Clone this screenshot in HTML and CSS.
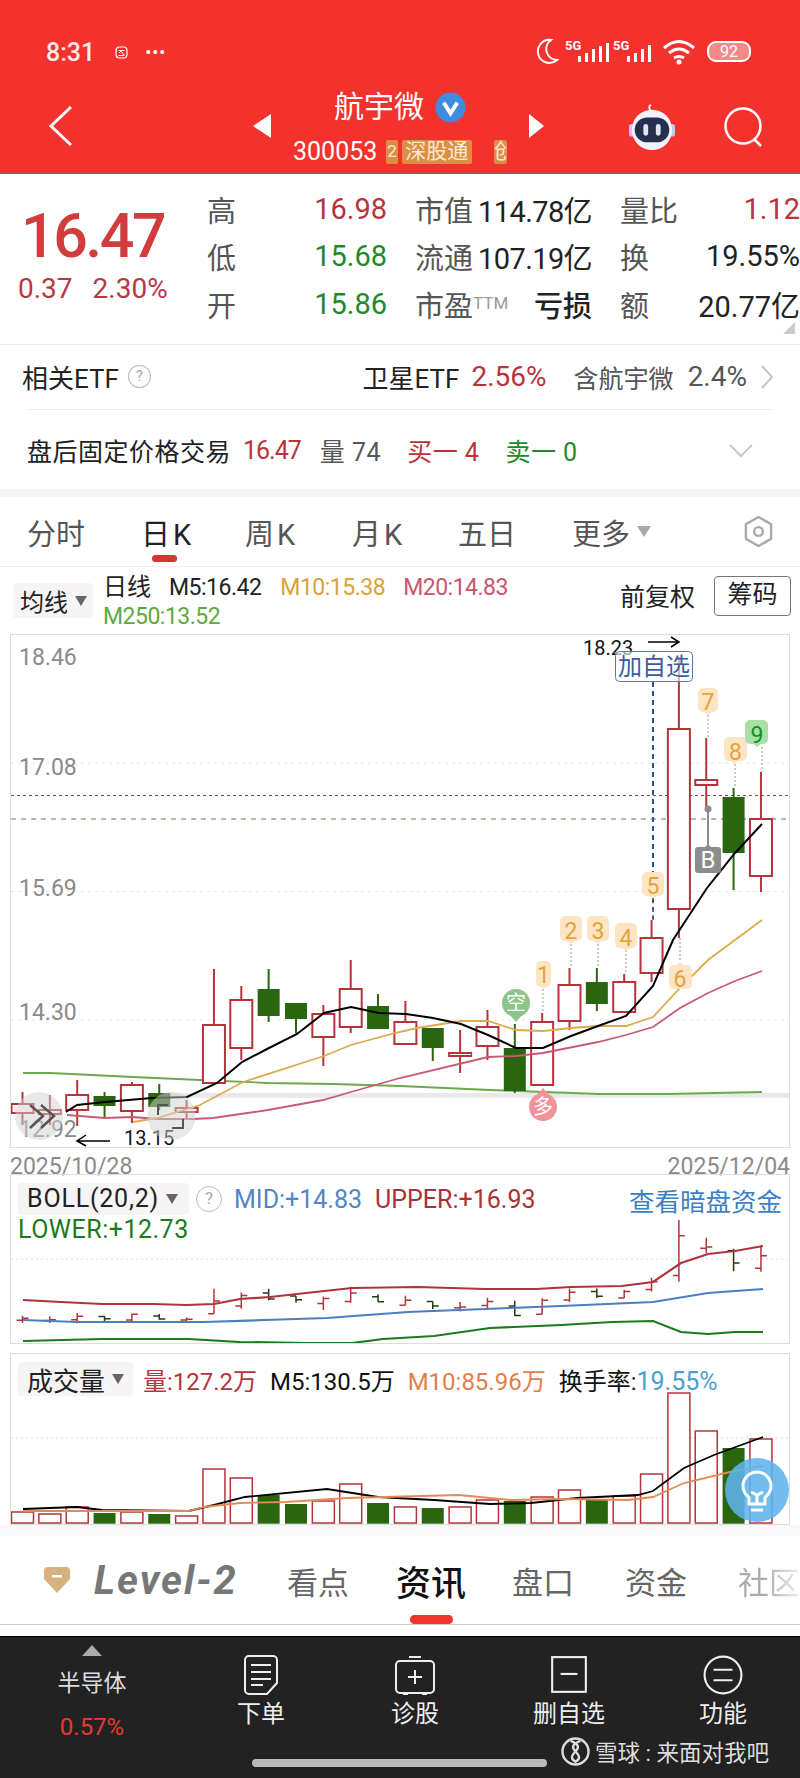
FILE: index.html
```html
<!DOCTYPE html>
<html lang="zh-CN">
<head>
    <meta charset="UTF-8">
    <meta name="viewport" content="width=device-width, initial-scale=1.0">
    <title>航宇微 300053</title>
    <link rel="stylesheet" href="styles.css">
</head>
<body>
<div class="phone">

    <header class="topbar">
        <div class="status">
            <div class="status-left">
                <span class="clock">8:31</span>
                <svg class="status-app" viewBox="0 0 13 13"><rect x="1" y="1" width="11" height="11" rx="3.5" fill="none" stroke="#fff" stroke-width="1.2"/><path d="M3.5 4.5h6M4 7l2-2 3 4M3.5 9.5h6" fill="none" stroke="#fff"/></svg>
                <span class="status-dots">•••</span>
            </div>
            <svg class="status-right" viewBox="537 37 216 30">
                <path d="M552 40a11.500 11.500 0 1 0 6 20a11 11 0 0 1-6-20z" fill="none" stroke="#fff" stroke-width="2"/>
                <text class="net" x="566" y="50">5G</text>
                <g fill="#fff"><rect x="579" y="56" width="3" height="6"/><rect x="586" y="53" width="3" height="9"/><rect x="593" y="49" width="3" height="13"/><rect x="600" y="46" width="3" height="16"/><rect x="607" y="43" width="3" height="19"/></g>
                <text class="net" x="614" y="50">5G</text>
                <g fill="#fff"><rect x="628" y="56" width="3" height="6"/><rect x="635" y="53" width="3" height="9"/><rect x="642" y="49" width="3" height="13"/><rect x="649" y="45" width="3" height="17"/></g>
                <g fill="none" stroke="#fff" stroke-width="3"><path d="M665 48q15-13 30 0"/><path d="M670 53q10-8 20 0"/><path d="M675 58q5-3 10 0"/></g>
                <circle cx="680" cy="62" r="2.500" fill="#fff"/>
                <rect x="709" y="42" width="42" height="19" rx="8" fill="#f58b88" stroke="#fff" stroke-width="2"/>
                <text class="batt" x="730" y="57">92</text>
            </svg>
        </div>
        <nav class="stock-nav">
            <svg class="nav-back" viewBox="0 0 26 42"><path d="M23 2L3 21l20 19" fill="none" stroke="#fff" stroke-width="3"/></svg>
            <span class="arrow-left"></span>
            <div class="stock-title">
                <div class="stock-name">航宇微 <svg class="v-badge" viewBox="0 0 32 32"><circle cx="16" cy="16" r="15.500" fill="#3f8be0"/><path d="M9 11l7 11 7-11" fill="none" stroke="#fff" stroke-width="4"/></svg></div>
                <div class="stock-code">300053
                    <span class="tag tag-left"><span>2</span></span>
                    <span class="tag">深股通</span>
                    <span class="tag tag-cut">创业板</span>
                </div>
            </div>
            <span class="arrow-right"></span>
            <div class="nav-actions">
                <svg class="robot" viewBox="0 0 50 50">
                    <path d="M25 9c-3-1-4-6-1-7" fill="none" stroke="#eee" stroke-width="2"/>
                    <rect x="1" y="22" width="6" height="13" rx="3" fill="#c9c6f2"/><rect x="43" y="22" width="6" height="13" rx="3" fill="#c9c6f2"/>
                    <circle cx="25" cy="28" r="21" fill="#f3f1fb"/>
                    <rect x="7" y="15" width="36" height="26" rx="13" fill="#25304f"/>
                    <rect x="16" y="22" width="5" height="12" rx="2.500" fill="#dfe6f5"/><rect x="29" y="22" width="5" height="12" rx="2.500" fill="#dfe6f5"/>
                </svg>
                <svg class="search" viewBox="0 0 40 40"><circle cx="19" cy="19" r="17.500" fill="none" stroke="#fff" stroke-width="2.500"/><path d="M30 32l7 7" stroke="#fff" stroke-width="2.500"/></svg>
            </div>
        </nav>
    </header>

    <section class="quote">
        <div class="price-box">
            <div class="price">16.47</div>
            <div class="price-change"><span>0.37</span><span>2.30%</span></div>
        </div>
        <div class="stats">
            <div class="stat"><span class="label">高</span><span class="red">16.98</span></div>
            <div class="stat"><span class="label">市值</span><span class="tight">114.78亿</span></div>
            <div class="stat"><span class="label">量比</span><span class="red">1.12</span></div>
            <div class="stat"><span class="label">低</span><span class="green">15.68</span></div>
            <div class="stat"><span class="label">流通</span><span class="tight">107.19亿</span></div>
            <div class="stat"><span class="label">换</span><span>19.55%</span></div>
            <div class="stat"><span class="label">开</span><span class="green">15.86</span></div>
            <div class="stat"><span class="label">市盈<small>TTM</small></span><strong>亏损</strong></div>
            <div class="stat"><span class="label">额</span><span>20.77亿</span></div>
        </div>
        <span class="corner"></span>
    </section>

    <section class="etf-row">
        <span>相关ETF</span>
        <span class="help">?</span>
        <span class="etf-name">卫星ETF</span>
        <span class="red etf-pct">2.56%</span>
        <span class="gray etf-hold">含航宇微</span>
        <span class="gray etf-hold-pct">2.4%</span>
        <svg class="chev" viewBox="0 0 14 26"><path d="M2 2l10 11L2 24" fill="none" stroke="#c4c4c4" stroke-width="2"/></svg>
    </section>

    <section class="after-row">
        <span>盘后固定价格交易</span>
        <span class="red after-price">16.47</span>
        <span class="gray after-vol">量 74</span>
        <span class="red after-buy">买一 4</span>
        <span class="green after-sell">卖一 0</span>
        <svg class="chev-down" viewBox="0 0 26 16"><path d="M2 2l11 11L24 2" fill="none" stroke="#c9c9c9" stroke-width="2"/></svg>
    </section>

    <div class="band"></div>

    <section class="period-tabs">
        <span class="period">分时</span>
        <span class="period active k-tab">日K</span>
        <span class="period k-tab">周K</span>
        <span class="period k-tab">月K</span>
        <span class="period">五日</span>
        <span class="period period-more">更多<i class="caret caret-light"></i></span>
        <svg class="hex" viewBox="0 0 32 32"><path d="M16 1l13 7.500v15L16 31 3 23.500v-15z" fill="none" stroke="#aaa" stroke-width="2.500"/><circle cx="16" cy="16" r="4.500" fill="none" stroke="#aaa" stroke-width="2.500"/></svg>
    </section>

    <section class="ma-row">
        <div class="chip chip-ma">均线<i class="caret"></i></div>
        <div class="ma-values">
            <div><span class="ma-day">日线</span><span class="ma-5">M5:16.42</span><span class="ma-10">M10:15.38</span><span class="ma-20">M20:14.83</span></div>
            <div class="ma-250">M250:13.52</div>
        </div>
        <span class="adjust">前复权</span>
        <span class="chip-box">筹码</span>
    </section>

    <section class="frame chart-main">
        <svg viewBox="11 635 778 512" width="778" height="512">
            <g stroke="#e6e6e6" stroke-dasharray="3 4">
                <line x1="11" x2="789" y1="763" y2="763"/><line x1="11" x2="789" y1="891.500" y2="891.500"/><line x1="11" x2="789" y1="1020" y2="1020"/>
            </g>
            <line x1="11" x2="789" y1="795.500" y2="795.500" stroke="#75573a" stroke-dasharray="3 3"/>
            <line x1="11" x2="789" y1="819" y2="819" stroke="#7d6a55" stroke-dasharray="5 5"/>
            <rect x="160" y="1093" width="629" height="5" fill="#e9e9e9"/>
            <polyline class="line" stroke="#6ca84e" points="23,1073 50,1073 133,1077 200,1080 268,1083 333,1084 400,1086 490,1090 516,1091 600,1094 667,1094 762,1092"/>
            <line x1="653" x2="653" y1="682" y2="920" stroke="#2f4d8f" stroke-width="2" stroke-dasharray="5 4"/>
            <g id="main-candles"></g>
            <polyline class="line" stroke="#c95a74" points="67,1115 105,1118 132,1117 157,1119 193,1119 213,1118 268,1110 323,1100 351,1092 400,1078 488,1057 516,1056 543,1053 598,1042 626,1035 653,1027 680,1008 708,993 735,981 762,971"/>
            <polyline class="line" stroke="#dcab4c" points="133,1122 157,1118 200,1105 243,1082 324,1056 351,1045 395,1033 417,1028 461,1021 488,1021 516,1030 543,1031 571,1028 598,1026 626,1026 653,1017 680,988 708,960 735,940 762,920"/>
            <polyline class="line line-ma5" points="66,1112 77,1105 105,1102 152,1098 187,1097 217,1083 242,1062 269,1048 297,1034 324,1013 351,1007 379,1013 406,1014 433,1018 461,1024 488,1035 516,1048 543,1048 571,1036 598,1026 626,1016 653,986 673,940 707,888 735,853 762,824"/>

            <text class="axis" x="19" y="665">18.46</text>
            <text class="axis" x="19" y="775">17.08</text>
            <text class="axis" x="19" y="896">15.69</text>
            <text class="axis" x="19" y="1020">14.30</text>
            <text class="extreme" x="583" y="655">18.23</text>
            <path d="M648 642h31m-8-5l8 5-8 5" fill="none" stroke="#000" stroke-width="1.500"/>
            <rect class="add-box" x="615.500" y="651.500" width="77" height="30" rx="4"/>
            <text class="add-text" x="654" y="675">加自选</text>

            <g stroke="#999" stroke-dasharray="2 2">
                <line x1="571" x2="571" y1="944" y2="968"/><line x1="598" x2="598" y1="944" y2="968"/><line x1="626" x2="626" y1="950" y2="974"/>
                <line x1="543" x2="543" y1="989" y2="1013"/><line x1="653" x2="653" y1="898" y2="920"/><line x1="680" x2="680" y1="938" y2="962"/>
                <line x1="708" x2="708" y1="715" y2="738"/><line x1="735" x2="735" y1="764" y2="788"/><line x1="762" x2="762" y1="747" y2="772"/>
            </g>
            <g class="mark">
                <rect x="536" y="961" width="15" height="26" rx="5"/><path d="M540 986h7l-3.500 3z"/><text x="543.500" y="983">1</text>
                <rect x="560" y="916" width="22" height="25" rx="5"/><path d="M566 940h10l-5 4z"/><text x="571" y="939">2</text>
                <rect x="587" y="916" width="22" height="25" rx="5"/><path d="M593 940h10l-5 4z"/><text x="598" y="939">3</text>
                <rect x="615" y="923" width="22" height="25" rx="5"/><path d="M621 947h10l-5 4z"/><text x="626" y="946">4</text>
                <rect x="642" y="872" width="22" height="24" rx="5"/><path d="M648 895h10l-5 3z"/><text x="653" y="894">5</text>
                <rect x="669" y="965" width="23" height="24" rx="5"/><path d="M675 966h10l-5-4z"/><text x="680" y="987">6</text>
                <rect x="698" y="688" width="20" height="24" rx="5"/><path d="M703 711h10l-5 4z"/><text x="708" y="710">7</text>
                <rect x="724" y="737" width="23" height="24" rx="5"/><path d="M730 760h10l-5 4z"/><text x="735.500" y="760">8</text>
            </g>
            <g class="mark mark-green">
                <rect x="745" y="720" width="23" height="24" rx="5"/><path d="M752 743h10l-5 4z"/><text x="757" y="743">9</text>
            </g>
            <circle cx="516" cy="1003" r="14" fill="#8cc58a"/><path d="M510 1015h12l-6 7z" fill="#8cc58a"/>
            <text class="sign" x="516" y="1010">空</text>
            <circle cx="543" cy="1107" r="14" fill="#f2939a"/><path d="M537 1095h12l-6-7z" fill="#f2939a"/>
            <text class="sign" x="543" y="1114">多</text>
            <line x1="708" x2="708" y1="809" y2="846" stroke="#8c8c8c" stroke-width="2"/>
            <circle cx="708" cy="809" r="3.500" fill="#8c8c8c"/>
            <path d="M698 847h7l3-3 3 3h7a3 3 0 0 1 3 3v20a3 3 0 0 1-3 3h-20a3 3 0 0 1-3-3v-20a3 3 0 0 1 3-3z" fill="#8c8c8c"/>
            <text class="sign sign-b" x="708" y="868">B</text>

            <text class="axis" x="19" y="1137">12.92</text>
            <path d="M110 1141H78m8-6l-9 6 9 5" fill="none" stroke="#000" stroke-width="1.500"/>
            <text class="extreme" x="124" y="1145">13.15</text>
            <circle cx="39" cy="1116" r="24" fill="#d2d2d2" fill-opacity=".5"/>
            <path d="M30 1105l13 11-13 12M41 1105l13 11-13 12" fill="none" stroke="#555" stroke-width="2.500"/>
            <circle cx="171.500" cy="1116" r="24" fill="#d2d2d2" fill-opacity=".5"/>
            <path d="M158 1115v-10h10M183 1119v9h-11" fill="none" stroke="#555" stroke-width="2"/>
        </svg>
    </section>

    <div class="dates"><span>2025/10/28</span><span>2025/12/04</span></div>

    <section class="frame panel panel-boll">
        <svg viewBox="11 1175 778 168" width="778" height="168">
            <line x1="11" x2="789" y1="1259" y2="1259" stroke="#ddd" stroke-dasharray="2 3"/>
            <g id="boll-bars"></g>
            <polyline class="line line-thick" stroke="#4a7fbf" points="23,1320 77,1322 153,1322 204,1322 265,1320 327,1318 408,1312 459,1310 510,1308 561,1306 653,1302 708,1293 763,1289"/>
            <polyline class="line line-thick" stroke="#b0333a" points="23,1300 61,1302 102,1304 153,1304 186,1305 214,1304 240,1299 270,1297 306,1293 352,1288 418,1287 485,1289 536,1289 571,1287 622,1286 653,1282 681,1263 708,1254 735,1251 763,1246"/>
            <polyline class="line line-thick" stroke="#1c7a1c" points="23,1341 102,1339 189,1339 240,1342 306,1343 352,1343 383,1339 434,1336 490,1328 561,1325 612,1322 653,1321 681,1332 708,1334 735,1332 763,1332"/>
        </svg>
        <div class="panel-head">
            <div class="boll-line">
                <div class="chip chip-boll">BOLL(20,2)<i class="caret"></i></div>
                <span class="help help-boll">?</span>
                <span class="boll-mid">MID:+14.83</span>
                <span class="boll-upper">UPPER:+16.93</span>
                <span class="boll-link">查看暗盘资金</span>
            </div>
            <div class="boll-lower">LOWER:+12.73</div>
        </div>
    </section>

    <section class="frame panel panel-vol">
        <svg viewBox="11 1354 778 170" width="778" height="170">
            <line x1="11" x2="789" y1="1438" y2="1438" stroke="#ddd" stroke-dasharray="2 3"/>
            <g id="vol-bars"></g>
            <polyline class="line" stroke="#000" points="23,1509 77,1507 102,1510 189,1511 214,1505 245,1497 327,1489 378,1497 434,1500 490,1504 531,1503 577,1498 638,1495 653,1491 684,1468 714,1455 763,1437"/>
            <polyline class="line" stroke="#e58a55" points="23,1511 189,1511 204,1507 240,1503 286,1502 347,1498 459,1495 510,1500 561,1499 628,1500 653,1497 684,1483 730,1472 763,1466"/>
        </svg>
        <div class="panel-head">
            <div class="vol-line">
                <div class="chip chip-vol">成交量<i class="caret"></i></div>
                <span class="vol-now">量:127.2万</span>
                <span class="vol-m5">M5:130.5万</span>
                <span class="vol-m10">M10:85.96万</span>
                <span class="vol-turn">换手率:<em>19.55%</em></span>
            </div>
        </div>
        <div class="bulb">
            <svg viewBox="0 0 64 64" width="64" height="64"><path d="M32 14a14 14 0 0 0-8 25.500V46h16v-6.500A14 14 0 0 0 32 14zM26 34l6 3 6-3M32 37v9M26 52h12" fill="none" stroke="#fff" stroke-width="3"/></svg>
        </div>
    </section>

    <div class="band band-low"></div>

    <section class="info-tabs">
        <svg class="diamond" viewBox="0 0 30 28"><path d="M6 1h18a4 4 0 0 1 4 4v8L15 27 2 13V5a4 4 0 0 1 4-4z" fill="#d6b27e"/><rect x="10" y="9" width="10" height="2.500" fill="#fff"/></svg>
        <span class="level2">Level-2</span>
        <span>看点</span>
        <span class="info-active">资讯</span>
        <span>盘口</span>
        <span>资金</span>
        <span class="info-fade">社区</span>
    </section>

    <footer class="toolbar">
        <div class="sector">
            <span class="sector-up"></span>
            <span class="sector-name">半导体</span>
            <span class="sector-pct">0.57%</span>
        </div>
        <div class="tool">
            <svg viewBox="0 0 36 40"><path d="M6 1h24a4 4 0 0 1 4 4v23l-10 11H6a4 4 0 0 1-4-4V5a4 4 0 0 1 4-4zM8 10h20M8 17h20M8 24h20M8 30h12" fill="none" stroke="#eee" stroke-width="2"/></svg>
            <span>下单</span>
        </div>
        <div class="tool">
            <svg viewBox="0 0 44 40"><path d="M16 2h12M7 6h30a4 4 0 0 1 4 4v24a4 4 0 0 1-4 4H7a4 4 0 0 1-4-4V10a4 4 0 0 1 4-4zM22 15v14M15 22h14M10 39h5M29 39h5" fill="none" stroke="#eee" stroke-width="2"/></svg>
            <span>诊股</span>
        </div>
        <div class="tool">
            <svg viewBox="0 0 36 38"><rect x="2" y="2" width="32" height="33" fill="none" stroke="#eee" stroke-width="2"/><path d="M10 18h16" stroke="#eee" stroke-width="2"/></svg>
            <span>删自选</span>
        </div>
        <div class="tool">
            <svg viewBox="0 0 38 38"><circle cx="19" cy="19" r="17.500" fill="none" stroke="#eee" stroke-width="2"/><path d="M10 14h18M10 24h18" stroke="#eee" stroke-width="2"/></svg>
            <span>功能</span>
        </div>
        <div class="watermark">
            <svg viewBox="0 0 30 30"><circle cx="15" cy="15" r="13.500" fill="none" stroke="#ddd" stroke-width="2.500"/><path d="M10 4c7 3 10 6 5 11s-5 8 1 11M20 4c-7 3-10 6-5 11s5 8-1 11" fill="none" stroke="#ddd" stroke-width="2.500"/></svg>
            <span>雪球 : 来面对我吧</span>
        </div>
        <div class="home-bar"></div>
    </footer>
</div>
<script src="chart.js"></script>
</body>
</html>
```

FILE: styles.css
```css
* {
    box-sizing: border-box;
}

body {
    margin: 0;
    background-color: #fff;
    font-family: Roboto, "Noto Sans CJK SC", sans-serif;
    color: #222;
}

.phone {
    width: 800px;
    height: 1778px;
    overflow: hidden;
    position: relative;
}

.red { color: #b8343a; }
.green { color: #1e8a2a; }
.gray { color: #555; }

/* top bar */
.topbar {
    height: 174px;
    background-color: #f3322e;
    border-bottom: 2px solid #c9434a;
    color: #fff;
}

.status {
    height: 88px;
    padding: 16px 48px 0 46px;
    display: flex;
    justify-content: space-between;
    align-items: center;
}

.status-left {
    display: flex;
    align-items: center;
}

.clock {
    font-size: 25px;
    font-weight: 500;
    color: #fbe9e8;
}

.status-app {
    width: 13px;
    height: 13px;
    margin-left: 20px;
}

.status-dots {
    font-size: 18px;
    letter-spacing: 1px;
    margin-left: 17px;
}

.status-right {
    width: 216px;
    height: 30px;
}

.net {
    font-size: 13px;
    font-weight: 700;
    fill: #fff;
}

.batt {
    font-size: 16px;
    fill: #fff;
    text-anchor: middle;
}

.stock-nav {
    height: 84px;
    display: grid;
    grid-template-columns: 253px 18px 258px 15px 1fr;
    align-items: center;
}

.nav-back {
    width: 26px;
    height: 42px;
    margin: 0 0 8px 48px;
}

.arrow-left {
    width: 0;
    height: 0;
    border-style: solid;
    border-width: 12.5px 18px 12.5px 0;
    border-color: transparent #fff transparent transparent;
    margin-bottom: 8px;
}

.arrow-right {
    width: 0;
    height: 0;
    border-style: solid;
    border-width: 12px 0 12px 15px;
    border-color: transparent transparent transparent #fff;
    margin-bottom: 8px;
}

.stock-title {
    display: flex;
    flex-direction: column;
    align-items: center;
    height: 84px;
}

.stock-name {
    height: 38px;
    font-size: 30px;
    line-height: 38px;
    display: flex;
    align-items: center;
    gap: 1px;
}

.v-badge {
    width: 31px;
    height: 31px;
    margin-left: 10px;
}

.stock-code {
    margin-top: 13px;
    display: flex;
    align-items: center;
    font-size: 25px;
    line-height: 25px;
    gap: 9px;
    width: 214px;
}

.tag {
    height: 24px;
    padding: 0 3.5px;
    font-size: 21px;
    line-height: 23px;
    background-color: #dc8f44;
    border-radius: 2px;
    color: #fbe7d2;
    white-space: nowrap;
    margin-left: -5px;
}

.tag-left {
    width: 12px;
    padding: 0;
    text-align: center;
    margin-left: 0;
    font-size: 17px;
}

.tag-cut {
    width: 14px;
    padding: 0;
    overflow: hidden;
    margin-left: 13px;
}

.nav-actions {
    display: flex;
    align-items: center;
    margin-left: 84px;
    margin-bottom: 6px;
    gap: 48px;
}

.robot {
    width: 48px;
    height: 48px;
}

.search {
    width: 40px;
    height: 40px;
}

/* quote */
.quote {
    height: 171px;
    display: flex;
    position: relative;
    border-bottom: 1px solid #eee;
}

.price-box {
    width: 207px;
    padding-top: 32px;
}

.price {
    font-size: 61px;
    line-height: 60px;
    font-weight: 500;
    letter-spacing: -2.5px;
    padding-left: 21px;
    color: #d23c3c;
}

.price-change {
    margin-top: 6px;
    padding-left: 18px;
    display: flex;
    gap: 20px;
    font-size: 28px;
    line-height: 34px;
    color: #b8383f;
}

.stats {
    display: grid;
    grid-template-columns: 180px 177px 180px;
    grid-auto-rows: 47.5px;
    column-gap: 28px;
    padding-top: 11px;
    font-size: 29px;
}

.stat {
    display: flex;
    justify-content: space-between;
    align-items: center;
    white-space: nowrap;
}

.stat strong {
    font-weight: 500;
}

.tight {
    letter-spacing: -0.6px;
}

.label {
    color: #555;
}

.label small {
    font-size: 17px;
    color: #999;
    vertical-align: 8px;
}

.corner {
    position: absolute;
    right: 5px;
    bottom: 10px;
    width: 0;
    height: 0;
    border-style: solid;
    border-width: 0 0 12px 12px;
    border-color: transparent transparent #ccc transparent;
}

/* etf rows */
.etf-row {
    height: 65px;
    margin: 0 26px;
    padding-bottom: 1px;
    display: flex;
    align-items: center;
    font-size: 26px;
    border-bottom: 1px solid #eee;
    white-space: nowrap;
}

.etf-row > span:first-child {
    margin-left: -4px;
}

.help {
    width: 23px;
    height: 23px;
    margin-left: 9px;
    border: 1.5px solid #bbb;
    border-radius: 50%;
    color: #aaa;
    font-size: 15px;
    line-height: 20px;
    text-align: center;
}

.etf-name { margin-left: 212px; }
.etf-pct { margin-left: 12px; font-size: 28px; }
.etf-hold { margin-left: 27px; font-size: 25px; }
.etf-hold-pct { margin-left: 14px; font-size: 28px; }

.chev {
    width: 14px;
    height: 26px;
    margin-left: 13px;
    flex: none;
}

.after-row {
    height: 79px;
    padding: 1px 0 0 27px;
    display: flex;
    align-items: center;
    font-size: 25px;
    letter-spacing: 0.5px;
    white-space: nowrap;
}

.after-price { margin-left: 12px; letter-spacing: -1px; }
.after-vol { margin-left: 19px; }
.after-buy { margin-left: 26px; }
.after-sell { margin-left: 26px; }

.chev-down {
    position: absolute;
    left: 728px;
    top: 443px;
    width: 26px;
    height: 16px;
}

.band {
    height: 8px;
    background-color: #f6f6f6;
}

/* period tabs */
.period-tabs {
    height: 70px;
    padding-left: 27px;
    display: grid;
    grid-template-columns: 114px 104px 107px 106px 114px 1fr 31px 26px;
    align-items: center;
    font-size: 29px;
    color: #555;
    border-bottom: 1px solid #eee;
}

.period {
    position: relative;
}

.k-tab {
    letter-spacing: 3px;
}

.period.active {
    color: #222;
}

.period.active::after {
    content: "";
    position: absolute;
    left: 11px;
    top: 44px;
    width: 25px;
    height: 7px;
    border-radius: 4px;
    background-color: #d9342f;
}

.period-more {
    display: flex;
    align-items: center;
}

.hex {
    width: 31px;
    height: 31px;
    grid-column: 7;
}

.caret {
    display: inline-block;
    width: 0;
    height: 0;
    margin-left: 7px;
    border-style: solid;
    border-width: 10px 6px 0 6px;
    border-color: #666 transparent transparent transparent;
}

.caret-light {
    border-width: 11px 7px 0 7px;
    border-color: #aaa transparent transparent transparent;
}

/* moving averages */
.ma-row {
    height: 67px;
    padding: 0 9px 0 13px;
    display: flex;
    align-items: flex-start;
    font-size: 23px;
    white-space: nowrap;
}

.chip {
    display: flex;
    align-items: center;
    background-color: #f6f4f4;
    border-radius: 4px;
    color: #222;
}

.chip-ma {
    width: 80px;
    height: 35px;
    margin-top: 16px;
    padding-left: 7px;
    font-size: 24px;
}

.ma-values {
    margin: 6px 0 0 10px;
    line-height: 29px;
    letter-spacing: -0.5px;
}

.ma-day { font-size: 24px; letter-spacing: 0; }
.ma-5 { margin-left: 18px; }
.ma-10 { margin-left: 19px; color: #d9a23a; }
.ma-20 { margin-left: 18px; color: #c9556f; }
.ma-250 { color: #5fa83f; }

.adjust {
    margin: 16px 19px 0 auto;
    font-size: 25px;
    line-height: 30px;
}

.chip-box {
    width: 77px;
    height: 40px;
    margin-top: 9px;
    border: 1px solid #777;
    border-radius: 4px;
    font-size: 25px;
    line-height: 36px;
    text-align: center;
}

/* charts */
.frame {
    width: 780px;
    margin-left: 10px;
    border: 1px solid #ddd;
}

.frame svg {
    display: block;
}

.chart-main {
    height: 514px;
}

.line {
    fill: none;
    stroke-width: 1.800;
}

.line-ma5 {
    stroke: #000;
    stroke-width: 2;
}

.line-thick {
    stroke-width: 2.200;
}

.axis {
    font-size: 23px;
    fill: #8a8a8a;
}

.extreme {
    font-size: 20px;
    fill: #111;
}

.add-box {
    fill: #fff;
    fill-opacity: .6;
    stroke: #5b7aa5;
}

.add-text {
    font-size: 24px;
    fill: #3a5da0;
    text-anchor: middle;
}

.mark rect, .mark path {
    fill: #fde5c3;
}

.mark text {
    font-size: 23px;
    fill: #e3a33f;
    text-anchor: middle;
}

.mark-green rect, .mark-green path {
    fill: #a9dfa9;
}

.mark-green text {
    fill: #12921a;
}

.sign {
    font-size: 20px;
    fill: #fff;
    text-anchor: middle;
}

.sign-b {
    font-size: 24px;
}

.dates {
    height: 26px;
    padding: 0 10px;
    display: flex;
    justify-content: space-between;
    font-size: 23px;
    line-height: 38px;
    color: #8a8a8a;
}

.panel {
    display: grid;
    position: relative;
}

.panel > svg, .panel-head {
    grid-area: 1 / 1;
}

.panel-boll {
    height: 170px;
}

.panel-vol {
    height: 172px;
    margin-top: 9px;
}

.panel-head {
    font-size: 24px;
    white-space: nowrap;
}

.boll-line {
    display: flex;
    align-items: center;
    height: 32px;
    margin-top: 8px;
    padding-left: 7px;
}

.chip-boll {
    width: 171px;
    height: 32px;
    padding-left: 9px;
    font-size: 25px;
    letter-spacing: .8px;
    line-height: 32px;
}

.help-boll {
    width: 26px;
    height: 26px;
    margin-left: 7px;
    line-height: 22px;
    font-size: 17px;
    flex: none;
}

.boll-mid { margin-left: 12px; color: #4f86c6; font-size: 25px; }
.boll-upper { margin-left: 13px; color: #a83238; font-size: 25px; }
.boll-link { margin-left: auto; margin-right: 7px; color: #3d7fc0; font-size: 25.5px; }

.boll-lower {
    padding-left: 7px;
    font-size: 25px;
    letter-spacing: .5px;
    line-height: 30px;
    color: #1b7a1b;
}

.vol-line {
    display: flex;
    align-items: center;
    height: 34px;
    margin-top: 8px;
    padding-left: 7px;
}

.chip-vol {
    width: 115px;
    height: 34px;
    padding-left: 9px;
    font-size: 26px;
}

.vol-now { margin-left: 10px; color: #b5343a; }
.vol-m5 { margin-left: 13px; color: #111; }
.vol-m10 { margin-left: 13px; color: #e07f4a; }
.vol-turn { margin-left: 13px; color: #111; }
.vol-turn em { font-style: normal; color: #4b9fd0; font-size: 25px; }

.bulb {
    position: absolute;
    right: 0;
    top: 104px;
    width: 64px;
    height: 64px;
    border-radius: 50%;
    background-color: rgba(95, 180, 238, 0.88);
}

.band-low {
    height: 11px;
    background-color: #f8f8f8;
}

/* info tabs */
.info-tabs {
    height: 89px;
    padding-left: 42px;
    display: grid;
    grid-template-columns: 52px 193px 109px 116px 113px 113px 1fr;
    align-items: center;
    font-size: 31px;
    color: #666;
    border-bottom: 1px solid #ccc;
    white-space: nowrap;
}

.diamond {
    width: 30px;
    height: 28px;
}

.level2 {
    font-size: 40px;
    font-weight: 700;
    font-style: italic;
    letter-spacing: 2px;
    color: #777;
}

.info-active {
    position: relative;
    font-size: 35px;
    font-weight: 500;
    color: #111;
}

.info-active::after {
    content: "";
    position: absolute;
    left: 14px;
    bottom: -18px;
    width: 43px;
    height: 9px;
    border-radius: 5px;
    background-color: #f0352b;
}

.info-fade {
    background: linear-gradient(90deg, #aaa 40%, #eee 100%);
    -webkit-background-clip: text;
    background-clip: text;
    color: transparent;
}

/* bottom toolbar */
.toolbar {
    height: 142px;
    margin-top: 11px;
    display: grid;
    grid-template-columns: 184px repeat(4, 154px);
    background-color: #222;
    border-top: 1px solid #000;
    position: relative;
}

.sector {
    display: flex;
    flex-direction: column;
    align-items: center;
}

.sector-up {
    width: 0;
    height: 0;
    margin-top: 8px;
    border-style: solid;
    border-width: 0 10px 11px 10px;
    border-color: transparent transparent #aaa transparent;
}

.sector-name {
    margin-top: 10px;
    font-size: 23px;
    line-height: 36px;
    color: #ddd;
}

.sector-pct {
    margin-top: 7px;
    font-size: 24px;
    line-height: 36px;
    color: #e8382f;
}

.tool {
    display: flex;
    flex-direction: column;
    align-items: center;
    padding-top: 18px;
    font-size: 24px;
    color: #eee;
}

.tool svg {
    height: 40px;
    width: 44px;
}

.tool span {
    line-height: 36px;
    margin-top: 1px;
}

.watermark {
    position: absolute;
    left: 561px;
    top: 98px;
    display: flex;
    align-items: center;
    gap: 5px;
    font-size: 22.5px;
    color: #ddd;
    white-space: nowrap;
}

.watermark svg {
    width: 29px;
    height: 29px;
}

.home-bar {
    position: absolute;
    left: 252px;
    top: 122px;
    width: 295px;
    height: 8px;
    border-radius: 4px;
    background-color: #bbb;
}
```

FILE: chart.js
```js
// high, low, body top, body bottom, up
var candles = [
    [1092, 1125, 1104, 1113, 1], [1095, 1125, 1110, 1114, 1], [1080, 1126, 1095, 1110, 1],
    [1092, 1118, 1096, 1106, 0], [1082, 1123, 1085, 1111, 1], [1084, 1110, 1093, 1107, 0],
    [1100, 1120, 1108, 1112, 1], [969, 1083, 1025, 1083, 1], [986, 1060, 1000, 1048, 1],
    [969, 1022, 989, 1016, 0], [1003, 1033, 1003, 1019, 0], [1005, 1066, 1014, 1037, 1],
    [960, 1033, 989, 1027, 1], [994, 1029, 1006, 1029, 0], [1001, 1044, 1022, 1044, 1],
    [1028, 1061, 1028, 1048, 0], [1030, 1073, 1053, 1056, 1], [1010, 1060, 1027, 1046, 1],
    [1024, 1093, 1048, 1091, 0], [1013, 1085, 1022, 1085, 1], [968, 1030, 985, 1021, 1],
    [968, 1011, 982, 1004, 0], [974, 1012, 982, 1012, 1], [920, 982, 938, 973, 1],
    [657, 938, 729, 909, 1], [738, 808, 780, 785, 1], [788, 890, 797, 853, 0],
    [772, 892, 819, 876, 1]
];

var volumes = [1512, 1514, 1507, 1513, 1512, 1514, 1516, 1469, 1478, 1495, 1504, 1501, 1484, 1503,
    1507, 1508, 1507, 1500, 1501, 1497, 1490, 1499, 1496, 1474, 1393, 1431, 1448, 1439];

var RED = "#b5333a";
var GREEN = "#2a6510";

function candleX(i) {
    return 22.5 + i * 27.35;
}

function bollY(y) {
    return 1220 + (y - 657) * 0.22;
}

var main = "";
var boll = "";
var vol = "";

candles.forEach(function (c, i) {
    var x = candleX(i);
    var color = c[4] ? RED : GREEN;
    main += '<line x1="' + x + '" x2="' + x + '" y1="' + c[0] + '" y2="' + c[1] + '" stroke="' + color + '" stroke-width="2"/>';
    if (c[4]) {
        main += '<rect x="' + (x - 11) + '" y="' + c[2] + '" width="22" height="' + (c[3] - c[2]) + '" fill="#fff" stroke="' + RED + '" stroke-width="2"/>';
    } else {
        main += '<rect x="' + (x - 11) + '" y="' + c[2] + '" width="22" height="' + (c[3] - c[2]) + '" fill="' + GREEN + '"/>';
    }

    var tickColor = c[4] ? RED : "#1f3d10";
    var open = c[4] ? c[3] : c[2];
    var close = c[4] ? c[2] : c[3];
    boll += '<path d="M' + x + ' ' + bollY(c[0]) + 'V' + bollY(c[1]) +
        'M' + (x - 6) + ' ' + bollY(open) + 'H' + x +
        'M' + x + ' ' + bollY(close) + 'H' + (x + 6) +
        '" fill="none" stroke="' + tickColor + '" stroke-width="1.500"/>';

    var top = volumes[i];
    if (c[4]) {
        vol += '<rect x="' + (x - 11) + '" y="' + top + '" width="22" height="' + (1523 - top) + '" fill="#fff" stroke="' + RED + '" stroke-width="1.500"/>';
    } else {
        vol += '<rect x="' + (x - 11) + '" y="' + top + '" width="22" height="' + (1523.7 - top) + '" fill="' + GREEN + '"/>';
    }
});

document.getElementById("main-candles").innerHTML = main;
document.getElementById("boll-bars").innerHTML = boll;
document.getElementById("vol-bars").innerHTML = vol;
```
